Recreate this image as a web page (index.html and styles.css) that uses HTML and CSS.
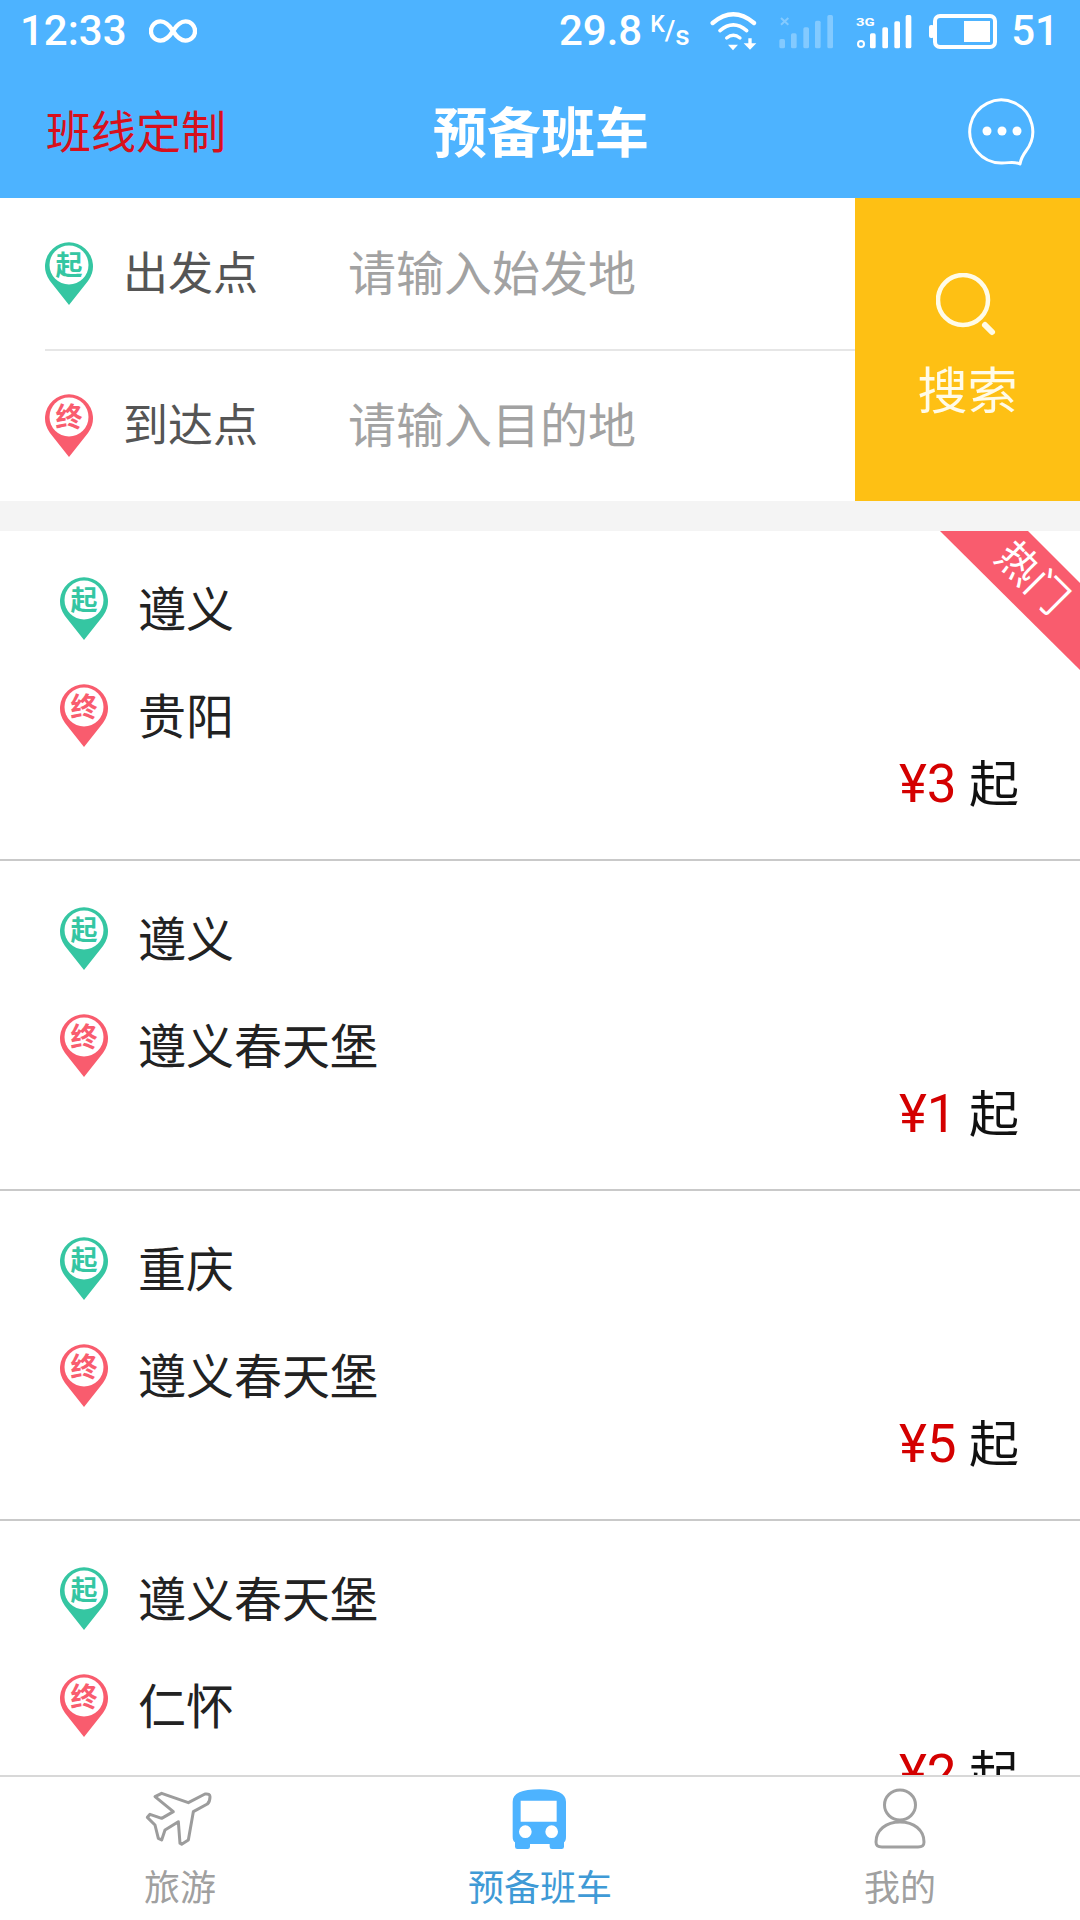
FILE: index.html
```html
<!DOCTYPE html>
<html lang="zh-CN">
<head>
<meta charset="utf-8">
<title>预备班车</title>
<link rel="stylesheet" href="styles.css">
</head>
<body>
<div class="app">
  <header class="header">
    <div class="status">
      <span class="time">12:33</span>
      <svg class="infinity" width="48" height="26" viewBox="0 0 50 26"><path d="M25 13C20 5 16 3 12 3a10 10 0 0 0 0 20c4 0 8-2 13-10s9-10 13-10a10 10 0 0 1 0 20c-4 0-8-2-13-10z" fill="none" stroke="#fff" stroke-width="4.500"/></svg>
      <div class="status-right">
        <span class="speed">29.8</span><span class="unit"><sup>K</sup>/<sub>s</sub></span>
        <svg class="signals" width="220" height="55" viewBox="0 0 660 165">
          <g fill="none" stroke="#fff" stroke-linecap="round">
            <path d="M38 57Q100 5 162 57" stroke-width="13"/>
            <path d="M60 80Q100 45 140 80" stroke-width="11"/>
            <path d="M80 102Q100 85 120 102" stroke-width="10"/>
          </g>
          <path d="M84 122H114L99 139Z" fill="#fff"/>
          <path d="M145 103H155V118H169L150 137L131 118H145Z" fill="#fff"/>
          <g fill="#fff" opacity=".3">
            <rect x="238" y="105" width="17" height="28" rx="5"/>
            <rect x="273" y="88" width="17" height="45" rx="5"/>
            <rect x="310" y="70" width="17" height="63" rx="5"/>
            <rect x="345" y="50" width="17" height="83" rx="5"/>
            <rect x="382" y="33" width="17" height="100" rx="5"/>
            <path d="M243 42L265 62M265 42L243 62" stroke="#fff" stroke-width="6"/>
          </g>
          <text x="468" y="66" class="net" textLength="56" lengthAdjust="spacingAndGlyphs">3G</text>
          <circle cx="483" cy="120" r="9" fill="none" stroke="#fff" stroke-width="6"/>
          <g fill="#fff">
            <rect x="510" y="88" width="17" height="45" rx="5"/>
            <rect x="547" y="70" width="17" height="63" rx="5"/>
            <rect x="583" y="52" width="17" height="81" rx="5"/>
            <rect x="617" y="33" width="17" height="100" rx="5"/>
          </g>
        </svg>
        <svg class="battery" width="68" height="35" viewBox="0 0 68 35">
          <rect x="0" y="11" width="5" height="13" rx="2" fill="#fff"/>
          <rect x="6" y="2" width="60" height="31" rx="5" fill="none" stroke="#fff" stroke-width="4"/>
          <rect x="35" y="7" width="26" height="21" fill="#fff"/>
        </svg>
        <span class="level">51</span>
      </div>
    </div>
    <nav class="nav">
      <a class="nav-link">班线定制</a>
      <h1 class="nav-title">预备班车</h1>
      <svg class="chat" width="68" height="70" viewBox="0 0 68 70">
        <path d="M52 67C46 64 42 66 34 66A31.500 31.500 0 1 1 58 54C55 58 53 61 52 67Z" fill="none" stroke="#fff" stroke-width="3" stroke-linejoin="round"/>
        <circle cx="19" cy="34" r="4.500" fill="#fff"/>
        <circle cx="34" cy="34" r="4.500" fill="#fff"/>
        <circle cx="49" cy="34" r="4.500" fill="#fff"/>
      </svg>
    </nav>
  </header>

  <section class="search">
    <div class="search-fields">
      <div class="field">
        <svg class="pin" width="48" height="63" viewBox="0 0 48 63"><path class="pin-start" d="M24 63L5 39A24 24 0 1 1 43 39Z"/><circle class="pin-hole" cx="24" cy="23" r="19.500"/><text class="pin-char pin-start" x="24" y="33">起</text></svg>
        <span class="field-label">出发点</span>
        <span class="field-input">请输入始发地</span>
      </div>
      <div class="field field-last">
        <svg class="pin" width="48" height="63" viewBox="0 0 48 63"><path class="pin-end" d="M24 63L5 39A24 24 0 1 1 43 39Z"/><circle class="pin-hole" cx="24" cy="23" r="19.500"/><text class="pin-char pin-end" x="24" y="33">终</text></svg>
        <span class="field-label">到达点</span>
        <span class="field-input">请输入目的地</span>
      </div>
    </div>
    <button class="search-btn">
      <svg width="64" height="64" viewBox="0 0 64 64"><circle cx="27" cy="27" r="25" fill="none" stroke="#fffbe8" stroke-width="4.500"/><path d="M49 52L56 59" stroke="#fffbe8" stroke-width="6" stroke-linecap="round"/></svg>
      <span class="search-text">搜索</span>
    </button>
  </section>

  <main class="list">
    <article class="route">
      <div class="ribbon"><span class="ribbon-text">热门</span></div>
      <div class="stop">
        <svg class="pin" width="48" height="63" viewBox="0 0 48 63"><path class="pin-start" d="M24 63L5 39A24 24 0 1 1 43 39Z"/><circle class="pin-hole" cx="24" cy="23" r="19.500"/><text class="pin-char pin-start" x="24" y="33">起</text></svg>
        <span class="stop-name">遵义</span>
      </div>
      <div class="stop">
        <svg class="pin" width="48" height="63" viewBox="0 0 48 63"><path class="pin-end" d="M24 63L5 39A24 24 0 1 1 43 39Z"/><circle class="pin-hole" cx="24" cy="23" r="19.500"/><text class="pin-char pin-end" x="24" y="33">终</text></svg>
        <span class="stop-name">贵阳</span>
      </div>
      <div class="price"><span class="amount">¥3</span> 起</div>
    </article>
    <article class="route">
      <div class="stop">
        <svg class="pin" width="48" height="63" viewBox="0 0 48 63"><path class="pin-start" d="M24 63L5 39A24 24 0 1 1 43 39Z"/><circle class="pin-hole" cx="24" cy="23" r="19.500"/><text class="pin-char pin-start" x="24" y="33">起</text></svg>
        <span class="stop-name">遵义</span>
      </div>
      <div class="stop">
        <svg class="pin" width="48" height="63" viewBox="0 0 48 63"><path class="pin-end" d="M24 63L5 39A24 24 0 1 1 43 39Z"/><circle class="pin-hole" cx="24" cy="23" r="19.500"/><text class="pin-char pin-end" x="24" y="33">终</text></svg>
        <span class="stop-name">遵义春天堡</span>
      </div>
      <div class="price"><span class="amount">¥1</span> 起</div>
    </article>
    <article class="route">
      <div class="stop">
        <svg class="pin" width="48" height="63" viewBox="0 0 48 63"><path class="pin-start" d="M24 63L5 39A24 24 0 1 1 43 39Z"/><circle class="pin-hole" cx="24" cy="23" r="19.500"/><text class="pin-char pin-start" x="24" y="33">起</text></svg>
        <span class="stop-name">重庆</span>
      </div>
      <div class="stop">
        <svg class="pin" width="48" height="63" viewBox="0 0 48 63"><path class="pin-end" d="M24 63L5 39A24 24 0 1 1 43 39Z"/><circle class="pin-hole" cx="24" cy="23" r="19.500"/><text class="pin-char pin-end" x="24" y="33">终</text></svg>
        <span class="stop-name">遵义春天堡</span>
      </div>
      <div class="price"><span class="amount">¥5</span> 起</div>
    </article>
    <article class="route">
      <div class="stop">
        <svg class="pin" width="48" height="63" viewBox="0 0 48 63"><path class="pin-start" d="M24 63L5 39A24 24 0 1 1 43 39Z"/><circle class="pin-hole" cx="24" cy="23" r="19.500"/><text class="pin-char pin-start" x="24" y="33">起</text></svg>
        <span class="stop-name">遵义春天堡</span>
      </div>
      <div class="stop">
        <svg class="pin" width="48" height="63" viewBox="0 0 48 63"><path class="pin-end" d="M24 63L5 39A24 24 0 1 1 43 39Z"/><circle class="pin-hole" cx="24" cy="23" r="19.500"/><text class="pin-char pin-end" x="24" y="33">终</text></svg>
        <span class="stop-name">仁怀</span>
      </div>
      <div class="price"><span class="amount">¥2</span> 起</div>
    </article>
  </main>

  <footer class="tabs">
    <div class="tab">
      <svg width="100" height="80" viewBox="0 0 300 240"><path d="M75 50L95 40L175 68L225 42Q240 40 240 50Q240 65 232 72L190 95L175 180L155 193L150 190L145 125L105 150L95 180L85 175L75 135L52 112L60 103L95 115L130 95Z" fill="none" stroke="#9c9c9c" stroke-width="9" stroke-linejoin="round"/></svg>
      <span class="tab-label">旅游</span>
    </div>
    <div class="tab tab-active">
      <svg width="100" height="80" viewBox="0 0 300 240"><path fill-rule="evenodd" d="M68 65C68 40 95 28 148 28S228 40 228 65V170Q228 183 222 187V200Q222 207 215 207H186Q179 207 179 200V192H120V200Q120 207 113 207H82Q75 207 75 200V187Q68 183 68 170ZM92 62V125H200V62ZM106 136A19 19 0 1 0 106 174A19 19 0 1 0 106 136ZM185 136A19 19 0 1 0 185 174A19 19 0 1 0 185 136Z" fill="#4db3ff"/></svg>
      <span class="tab-label">预备班车</span>
    </div>
    <div class="tab">
      <svg width="100" height="80" viewBox="0 0 100 80"><ellipse cx="50" cy="25" rx="15.500" ry="15" fill="none" stroke="#a0a0a0" stroke-width="3"/><path d="M26 62C26 50 36 42 50 42S74 50 74 62C74 66 72 67 68 67H32C28 67 26 66 26 62Z" fill="none" stroke="#a0a0a0" stroke-width="3"/></svg>
      <span class="tab-label">我的</span>
    </div>
  </footer>
</div>
</body>
</html>
```

FILE: styles.css
```css
* { box-sizing: border-box; }
html, body { margin: 0; padding: 0; }
body {
  font-family: Roboto, "Noto Sans CJK SC", sans-serif;
  background: #fff;
}
.app {
  width: 1080px;
  height: 1920px;
  display: flex;
  flex-direction: column;
  overflow: hidden;
}

/* header */
.header { background: #4db3ff; color: #fff; flex: none; }
.status {
  height: 60px;
  display: flex;
  align-items: center;
  padding: 2px 21px 0 20px;
  font-size: 42px;
  font-weight: 500;
}
.time { line-height: 1; }
.infinity { margin-left: 22px; }
.status-right { margin-left: auto; display: flex; align-items: center; }
.speed { line-height: 1; }
.unit { font-size: 27px; margin-left: 8px; width: 47px; line-height: 1; }
.unit sup { font-size: 23px; vertical-align: 8px; line-height: 0; }
.unit sub { font-size: 28px; vertical-align: -5px; line-height: 0; }
.signals { margin-left: 3px; margin-right: 9px; }
.net { font: 700 35px Roboto, sans-serif; fill: #fff; }
.level { margin-left: 14px; line-height: 1; }
.nav {
  height: 138px;
  display: grid;
  grid-template-columns: 1fr auto 1fr;
  align-items: center;
  padding: 0 44px 0 46px;
}
.nav-link { font-size: 45px; color: #d8101c; font-family: "Noto Sans CJK SC", sans-serif; }
.nav-title { margin: 0; font-size: 54px; font-weight: 700; font-family: "Noto Sans CJK SC", sans-serif; }
.chat { justify-self: end; margin-top: 5px; }

/* search */
.search { height: 303px; display: flex; flex: none; background: #fff; }
.search-fields { flex: 1; padding-left: 45px; display: flex; flex-direction: column; }
.field {
  flex: 1;
  display: flex;
  align-items: center;
  border-bottom: 2px solid #e6e6e6;
}
.field-last { border-bottom: 0; }
.field-label {
  width: 225px;
  margin-left: 30px;
  margin-top: -6px;
  font-size: 45px;
  color: #555;
  font-family: "Noto Sans CJK SC", sans-serif;
}
.field-input { margin-top: -7px; font-size: 48px; color: #a2a2a2; font-family: "Noto Sans CJK SC", sans-serif; }
.search-btn {
  width: 225px;
  border: 0;
  padding: 0 0 4px;
  background: #fec014;
  display: flex;
  flex-direction: column;
  align-items: center;
  justify-content: center;
  gap: 15px;
}
.search-text { font-size: 50px; line-height: 70px; color: #fffbe8; font-family: "Noto Sans CJK SC", sans-serif; }

/* pins */
.pin { flex: none; display: block; }
.pin-start { fill: #35c6a2; }
.pin-end { fill: #f95c6e; }
.pin-hole { fill: #fff; }
.pin-char {
  font: 700 27px "Noto Sans CJK SC", sans-serif;
  text-anchor: middle;
}

/* list */
.list {
  flex: 1;
  min-height: 0;
  margin-top: 30px;
  overflow: hidden;
  background: #fff;
  box-shadow: 0 -30px 0 #f4f4f4;
}
.route {
  position: relative;
  height: 330px;
  padding: 46px 61px 0 60px;
  border-bottom: 2px solid #c9c9c9;
}
.stop { display: flex; align-items: center; height: 63px; }
.stop + .stop { margin-top: 44px; }
.stop-name {
  margin-left: 30px;
  margin-top: -6px;
  font-size: 48px;
  color: #222;
  font-family: "Noto Sans CJK SC", sans-serif;
}
.price {
  line-height: 74px;
  text-align: right;
  font-size: 50px;
  color: #111;
}
.amount { color: #d40000; font-size: 53px; }
.ribbon {
  position: absolute;
  top: 0;
  right: 0;
  width: 140px;
  height: 140px;
  background: #f95c6e;
  clip-path: polygon(0 0, 88px 0, 140px 52px, 140px 139px);
}
.ribbon-text {
  position: absolute;
  left: 50px;
  top: 22px;
  width: 90px;
  text-align: center;
  line-height: 44px;
  font-size: 41px;
  white-space: nowrap;
  color: #fff;
  transform: rotate(45deg);
  font-family: "Noto Sans CJK SC", sans-serif;
}

/* tabs */
.tabs {
  height: 145px;
  flex: none;
  display: grid;
  grid-template-columns: repeat(3, 360px);
  padding-top: 3px;
  background: #fff;
  border-top: 2px solid #d8d8d8;
}
.tab { display: flex; flex-direction: column; align-items: center; }
.tab-label {
  margin-top: 6px;
  font-size: 36px;
  line-height: 38px;
  color: #a0a0a0;
  font-family: "Noto Sans CJK SC", sans-serif;
}
.tab-active .tab-label { color: #3f9ad6; }
```
